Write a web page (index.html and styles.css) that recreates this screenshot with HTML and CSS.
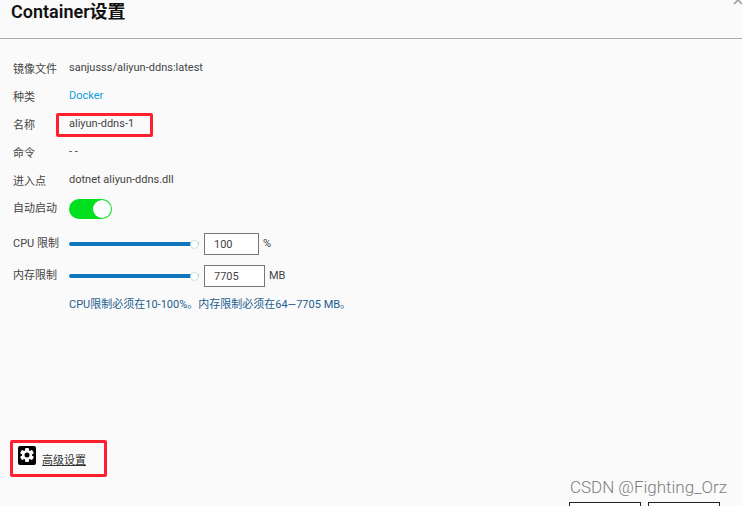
FILE: index.html
```html
<!DOCTYPE html>
<html lang="zh-CN">

<head>
    <meta charset="UTF-8">
    <meta name="viewport" content="width=device-width, initial-scale=1.0">
    <title>Container设置</title>
    <link rel="stylesheet" href="styles.css">
</head>

<body>
    <div class="dialog">
        <header class="dialog-header">
            <h1>Container设置</h1>
            <button type="button" class="close" aria-label="关闭">
                <svg width="10" height="10" viewBox="0 0 10 10">
                    <path d="M1 1l8 8M9 1l-8 8" fill="none" stroke="#999" stroke-width="1.5" />
                </svg>
            </button>
        </header>

        <form class="settings">
            <div class="row info">
                <span class="label">镜像文件</span>
                <span class="value">sanjusss/aliyun-ddns:latest</span>
            </div>
            <div class="row info">
                <span class="label">种类</span>
                <a class="value type-link" href="#">Docker</a>
            </div>
            <div class="row info">
                <span class="label">名称</span>
                <span class="value marked">aliyun-ddns-1</span>
            </div>
            <div class="row info">
                <span class="label">命令</span>
                <span class="value">- -</span>
            </div>
            <div class="row info">
                <span class="label">进入点</span>
                <span class="value">dotnet aliyun-ddns.dll</span>
            </div>
            <div class="row auto-start">
                <label class="label" for="autoStart">自动启动</label>
                <input type="checkbox" id="autoStart" class="switch" checked>
            </div>

            <!-- 资源限制 -->
            <div class="row limit">
                <label class="label" for="cpu">CPU 限制</label>
                <input type="range" class="slider" min="10" max="100" value="100" aria-label="CPU 限制">
                <input type="text" id="cpu" class="number" value="100">
                <span>%</span>
            </div>
            <div class="row limit">
                <label class="label" for="memory">内存限制</label>
                <input type="range" class="slider" min="64" max="7705" value="7705" aria-label="内存限制">
                <input type="text" id="memory" class="number wide" value="7705">
                <span>MB</span>
            </div>
            <p class="hint">CPU限制必须在10-100%。内存限制必须在64—7705 MB。</p>
        </form>

        <div class="advanced">
            <svg class="gear" width="20" height="20" viewBox="0 0 20 20">
                <rect x="1" y="1" width="18" height="19" rx="2" fill="#000" />
                <g fill="#fff">
                    <circle cx="10" cy="10" r="5" />
                    <rect x="8" y="3" width="4" height="14" rx="1" />
                    <rect x="8" y="3" width="4" height="14" rx="1" transform="rotate(60 10 10)" />
                    <rect x="8" y="3" width="4" height="14" rx="1" transform="rotate(120 10 10)" />
                </g>
                <circle cx="10" cy="10" r="2.5" fill="#000" />
            </svg>
            <a href="#">高级设置</a>
        </div>

        <footer class="dialog-footer">
            <button type="button" aria-label="确定"></button>
            <button type="button" aria-label="取消"></button>
        </footer>
    </div>

    <div class="watermark">CSDN @Fighting_Orz</div>
</body>

</html>
```

FILE: styles.css
```css
*,
*::before,
*::after {
    box-sizing: border-box;
}

body {
    margin: 0;
    height: 100vh;
    overflow: hidden;
    position: relative;
    background-color: #fafafa;
    color: #444;
    font-family: Roboto, "Noto Sans CJK SC", sans-serif;
    font-size: 11px;
    line-height: 16px;
}

.dialog-header {
    display: flex;
    justify-content: space-between;
    align-items: flex-start;
    height: 39px;
    padding-left: 11px;
    border-bottom: 1px solid #aaa;
}

.dialog-header h1 {
    margin: 0;
    color: #111;
    font-size: 18px;
    font-weight: 600;
    line-height: 24px;
}

.close {
    margin: -5px -1px 0 0;
    padding: 0;
    border: none;
    background: none;
    line-height: 0;
    cursor: pointer;
}

.settings {
    padding: 15px 13px 0;
}

.row {
    display: flex;
    align-items: center;
    height: 28px;
}

.label {
    flex: 0 0 56px;
}

.info .label {
    padding-top: 3px;
}

.type-link {
    color: #0ea0dc;
    text-decoration: none;
}

/* 红色标注框 */
.marked {
    position: relative;
}

.marked::after,
.advanced::after {
    content: "";
    position: absolute;
    border: 3px solid #ff1f2d;
    border-radius: 2px;
    pointer-events: none;
}

.marked::after {
    inset: -3px -19px -5px -13px;
}

.auto-start {
    padding-top: 2px;
}

.switch {
    appearance: none;
    display: flex;
    width: 43px;
    height: 20px;
    margin: 0;
    padding: 1px;
    border-radius: 10px;
    background-color: #00e01f;
    cursor: pointer;
}

.switch::before {
    content: "";
    width: 18px;
    height: 18px;
    border-radius: 50%;
    background-color: #fff;
}

.switch:checked {
    justify-content: flex-end;
}

.limit {
    height: 32px;
}

.auto-start + .limit {
    margin-top: 6px;
}

.slider {
    appearance: none;
    width: 130px;
    height: 10px;
    margin: 0 5px 0 0;
    background: none;
}

.slider::-webkit-slider-runnable-track {
    height: 4px;
    border-radius: 2px;
    background-color: #1177bd;
}

.slider::-webkit-slider-thumb {
    appearance: none;
    width: 9px;
    height: 9px;
    margin-top: -2px;
    border: 1px solid #c5e2e0;
    border-radius: 50%;
    background-color: #fff;
}

.number {
    width: 55px;
    height: 22px;
    margin-right: 4px;
    padding: 0 9px;
    border: 1px solid #777;
    background-color: #fff;
    color: #444;
    font: inherit;
}

.number.wide {
    width: 61px;
}

.hint {
    margin: 5px 0 0 56px;
    color: #1d6090;
}

.advanced {
    position: relative;
    display: flex;
    align-items: flex-end;
    gap: 5px;
    margin-top: 132px;
    padding-left: 17px;
}

.advanced::after {
    inset: -5px auto -10px 10px;
    width: 97px;
}

.advanced a {
    color: #333;
    margin-bottom: -2px;
}

.gear {
    margin-bottom: 2px;
}

.dialog-footer {
    display: flex;
    justify-content: flex-end;
    gap: 7px;
    padding: 35px 22px 16px;
}

.dialog-footer button {
    width: 72px;
    height: 28px;
    border: 1px solid #222;
    background-color: #fff;
}

.watermark {
    position: absolute;
    right: 15px;
    bottom: 8px;
    color: #808080;
    font-family: Roboto, sans-serif;
    font-size: 17px;
    font-weight: 300;
    line-height: 22px;
}
```
